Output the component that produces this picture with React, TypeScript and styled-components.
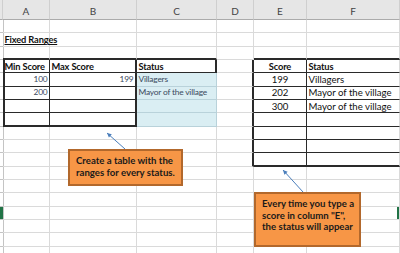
import React from 'react'
import styled, { createGlobalStyle } from 'styled-components'

const INK = '#2A2A2A'
const GRID = '#DADADA'
const TINT = '#DAEEF3'
const TINT_LINE = '#B9D2DA'
const EXCEL_GREEN = '#217346'

const thin = `1px solid ${INK}`
const thick = `2px solid ${INK}`
const grid = `1px solid ${GRID}`
const tintLine = `1px solid ${TINT_LINE}`
const headLine = '1px solid #C4C4C4'

const COLUMNS = [
    { name: '', width: 3 },
    { name: 'A', width: 47 },
    { name: 'B', width: 87 },
    { name: 'C', width: 80 },
    { name: 'D', width: 37 },
    { name: 'E', width: 53 },
    { name: 'F', width: 93 },
]
const ROW_COUNT = 18
const ACTIVE_ROW = 15

type Align = 'left' | 'right' | 'center'

interface CellDef {
    text?: string
    align?: Align
    bold?: boolean
    underline?: boolean
    small?: boolean
    tint?: boolean
    right: string
    bottom: string
    marker?: 'left' | 'right'
}

// cell contents keyed by "row:col"
const CONTENT: Record<string, Partial<CellDef>> = {
    '2:1': { text: 'Fixed Ranges', bold: true, underline: true },
    '4:1': { text: 'Min Score', bold: true },
    '4:2': { text: 'Max Score', bold: true },
    '4:3': { text: 'Status', bold: true },
    '5:1': { text: '100', align: 'right', small: true },
    '5:2': { text: '199', align: 'right', small: true },
    '5:3': { text: 'Villagers', small: true },
    '6:1': { text: '200', align: 'right', small: true },
    '6:3': { text: 'Mayor of the village', small: true },
    '4:5': { text: 'Score', bold: true, align: 'center' },
    '4:6': { text: 'Status', bold: true },
    '5:5': { text: '199', align: 'center' },
    '5:6': { text: 'Villagers' },
    '6:5': { text: '202', align: 'center' },
    '6:6': { text: 'Mayor of the village' },
    '7:5': { text: '300', align: 'center' },
    '7:6': { text: 'Mayor of the village' },
}

const describe = (row: number, col: number): CellDef => {
    const def: CellDef = { right: grid, bottom: grid }
    const inLeft = row >= 4 && row <= 8
    const inRight = row >= 4 && row <= 11

    if (col === 0) {
        def.right = inLeft ? thick : headLine
        def.bottom = headLine
        if (row === ACTIVE_ROW) def.marker = 'left'
    }
    if (row === 3 && ((col >= 1 && col <= 3) || col >= 5)) def.bottom = thick

    if (inLeft && col === 1) {
        def.right = thin
        def.bottom = row === 8 ? thick : thin
    }
    if (inLeft && col === 2) {
        def.right = thick
        def.bottom = row === 8 ? thick : thin
    }
    if (inLeft && col === 3) {
        if (row === 4) {
            def.right = thick
            def.bottom = thin
        } else {
            def.tint = true
            def.right = tintLine
            def.bottom = tintLine
        }
    }

    if (inRight && col === 4) def.right = thick
    if (inRight && col >= 5) {
        def.right = col === 5 ? thin : grid
        def.bottom = row === 11 ? thick : thin
    }
    if (col === 6 && row === ACTIVE_ROW) def.marker = 'right'

    return { ...def, ...CONTENT[`${row}:${col}`] }
}

const GlobalStyle = createGlobalStyle`
  html, body {
    margin: 0;
    padding: 0;
    background: #ffffff;
    overflow: hidden;
  }
`

const Page = styled.div`
  position: relative;
  width: 400px;
  height: 253px;
  overflow: hidden;
  font-family: Lato, "Liberation Sans", sans-serif;
`

const Sheet = styled.div`
  display: grid;
  grid-template-columns: ${COLUMNS.map(c => `${c.width}px`).join(' ')};
  grid-template-rows: 20px repeat(${ROW_COUNT}, 13.333px);
`

const ColumnHead = styled.div`
  box-sizing: border-box;
  display: flex;
  align-items: flex-end;
  justify-content: center;
  padding-bottom: 2px;
  background: #E6E6E6;
  border-right: 1px solid #CFCFCF;
  border-bottom: 1px solid #ABABAB;
  color: #444444;
  font-size: 10px;
`

const Cell = styled.div<{
    $align: Align
    $bold?: boolean
    $underline?: boolean
    $small?: boolean
    $tint?: boolean
    $right: string
    $bottom: string
    $marker?: 'left' | 'right'
}>`
  box-sizing: border-box;
  display: flex;
  align-items: flex-end;
  justify-content: ${({ $align }) => ($align === 'right' ? 'flex-end' : $align === 'center' ? 'center' : 'flex-start')};
  padding: 0 1.5px 0.5px;
  white-space: nowrap;
  overflow: visible;
  border-right: ${({ $right }) => $right};
  border-bottom: ${({ $bottom }) => $bottom};
  background: ${({ $tint, $marker }) => ($marker === 'left' ? EXCEL_GREEN : $tint ? TINT : 'transparent')};
  box-shadow: ${({ $marker }) => ($marker === 'right' ? `inset -2px 0 0 ${EXCEL_GREEN}` : 'none')};
  color: ${({ $small }) => ($small ? '#3B4A5E' : '#111111')};
  font-size: ${({ $small, $bold }) => ($small ? '8.4px' : $bold ? '9.3px' : '9.6px')};
  letter-spacing: ${({ $small, $bold }) => ($small ? '-0.2px' : $bold ? '-0.15px' : '0')};
  font-weight: ${({ $bold }) => ($bold ? 700 : 400)};
  text-decoration: ${({ $underline }) => ($underline ? 'underline' : 'none')};
  line-height: 11px;
`

const Callout = styled.div<{ $left: number; $top: number; $width: number; $height: number }>`
  position: absolute;
  left: ${({ $left }) => $left}px;
  top: ${({ $top }) => $top}px;
  width: ${({ $width }) => $width}px;
  height: ${({ $height }) => $height}px;
  box-sizing: border-box;
  padding: 4px 4px 0 6px;
  background: #F79646;
  border: 2px solid #B2682C;
  color: #1A1A1A;
  font-family: Lato, "Liberation Sans", sans-serif;
  font-size: 9.6px;
  font-weight: 700;
  line-height: 11.6px;
  white-space: nowrap;
`

const Arrows = styled.svg`
  position: absolute;
  left: 0;
  top: 0;
  pointer-events: none;
`

const Pointer = ({ x1, y1, x2, y2 }: { x1: number; y1: number; x2: number; y2: number }) => {
    // line from the callout (x1,y1) to the tip (x2,y2) with a small filled head
    const a = Math.atan2(y2 - y1, x2 - x1)
    const len = 5
    const spread = 0.45
    const p1 = `${x2 - len * Math.cos(a - spread)},${y2 - len * Math.sin(a - spread)}`
    const p2 = `${x2 - len * Math.cos(a + spread)},${y2 - len * Math.sin(a + spread)}`
    return (
        <g>
            <line x1={x1} y1={y1} x2={x2} y2={y2} stroke="#4A7EBB" strokeWidth={1} />
            <polygon points={`${x2},${y2} ${p1} ${p2}`} fill="#4A7EBB" />
        </g>
    )
}

export default function App() {
    const rows = Array.from({ length: ROW_COUNT }, (_, i) => i + 1)

    return (
        <Page>
            <GlobalStyle />
            <Sheet>
                {COLUMNS.map((c, i) => (
                    <ColumnHead key={`h${i}`}>{c.name}</ColumnHead>
                ))}
                {rows.map(r =>
                    COLUMNS.map((_, c) => {
                        const d = describe(r, c)
                        return (
                            <Cell
                                key={`${r}:${c}`}
                                $align={d.align ?? 'left'}
                                $bold={d.bold}
                                $underline={d.underline}
                                $small={d.small}
                                $tint={d.tint}
                                $right={d.right}
                                $bottom={d.bottom}
                                $marker={d.marker}
                            >
                                {d.text}
                            </Cell>
                        )
                    })
                )}
            </Sheet>

            <Arrows width={400} height={253}>
                <Pointer x1={125} y1={149} x2={107} y2={133} />
                <Pointer x1={303} y1={192} x2={283} y2={170} />
            </Arrows>

            <Callout $left={68} $top={149} $width={115} $height={37}>
                Create a table with the
                <br />
                ranges for every status.
            </Callout>
            <Callout $left={254} $top={192} $width={107} $height={55}>
                Every time you type a
                <br />
                score in column "E",
                <br />
                the status will appear
            </Callout>
        </Page>
    )
}
